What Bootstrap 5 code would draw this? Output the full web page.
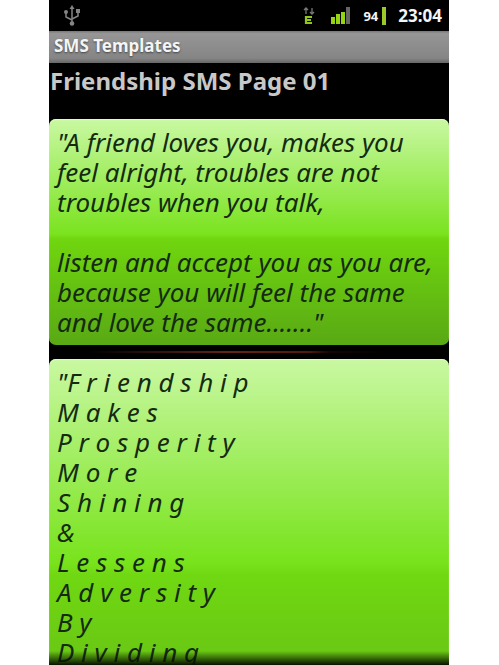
<!DOCTYPE html>
<html lang="en">
<head>
<meta charset="utf-8">
<meta name="viewport" content="width=device-width, initial-scale=1">
<title>SMS Templates</title>
<link href="https://cdn.jsdelivr.net/npm/bootstrap@5.3.0/dist/css/bootstrap.min.css" rel="stylesheet">
<style>
body { background: #fff; font-family: "Noto Sans", "Open Sans", sans-serif; padding: 0 50px 0 49px; }
.screen { background: #000; }
.status-bar { height: 31px; padding: 0 7px 0 14px; color: #f4f4f4; font-weight: 700; }
.status-bar svg { display: block; }
.clock { font-size: 17px; line-height: 30px; }
.level { font-size: 13px; line-height: 30px; }
.title-bar { height: 32px; padding: 0 5px; background: linear-gradient(#777, #969696 8%, #858585 85%, #686868); color: #f5f5f5; font-size: 17px; line-height: 30px; font-weight: 700; text-shadow: 0 1px 2px #444; }
.page-title { font-size: 24px; line-height: 36px; font-weight: 700; color: #c8c8c8; margin: 0 0 20px; padding: 0 1px; }
.messages { min-height: 0; }
.message { border-radius: 7px; padding: 8px 0 8px 8px; color: #142b12; background: linear-gradient(#c9f8a2, #7ae31f 51%, #70d60f 53%, #59a914); font-size: 26px; line-height: 30px; font-style: italic; box-shadow: inset 0 1px 1px #dcffc0; }
.message p { margin: 0; white-space: pre-line; }
.message-long { min-height: 400px; background: linear-gradient(#c9f8a2, #78e31c 51%, #70d812 54%, #62b416); }
.divider { height: 2px; margin: 6px 0; background: linear-gradient(90deg, #000 10%, #65231a 45%, #54170f 65%, #170404 70%, #000 85%); }
.fade-edge { height: 14px; background: linear-gradient(transparent, #081200); }
</style>
<script src="https://cdn.jsdelivr.net/npm/bootstrap@5.3.0/dist/js/bootstrap.bundle.min.js"></script>
</head>
<body>
<div class="screen d-flex flex-column vh-100 overflow-hidden position-relative">
  <header class="status-bar d-flex align-items-center flex-shrink-0">
    <svg class="me-auto" width="18" height="22" viewBox="0 0 18 22" fill="none" stroke="#858585" stroke-width="1.5" role="img" aria-label="USB connected"><path d="M9 3v15M9 15L3 12V7M9 14l6-3V7"/><path d="M9 0l2.500 4h-5zM13 4h4v4h-4z" fill="#858585" stroke="none"/><circle cx="3" cy="7" r="2" fill="#858585" stroke="none"/><circle cx="9" cy="18.500" r="2.300" fill="#858585" stroke="none"/></svg>
    <svg width="12" height="18" viewBox="0 0 12 18" role="img" aria-label="Mobile data"><path d="M3 7V1M1 3l2-2 2 2M9 1v6M7 5l2 2 2-2" fill="none" stroke="#777" stroke-width="1.300"/><path d="M9 10H3v6h6M3 13h5" fill="none" stroke="#8fc51d" stroke-width="2.200"/></svg>
    <svg class="ms-3" width="20" height="18" viewBox="0 0 20 18" role="img" aria-label="Signal strength"><path d="M0 10h4v7H0zM5 7h4v10H5zM10 5h4v12h-4z" fill="#93d510"/><path d="M15 0h4v17h-4z" fill="#666"/></svg>
    <span class="level ps-2 ms-1">94</span>
    <svg class="ms-1" width="4" height="18" viewBox="0 0 4 18" role="img" aria-label="Battery"><path d="M0 0h4v18H0z" fill="#9bc928"/></svg>
    <span class="clock ps-2 ms-1">23:04</span>
  </header>
  <div class="title-bar flex-shrink-0">SMS Templates</div>
  <h1 class="page-title flex-shrink-0">Friendship SMS Page 01</h1>
  <main class="messages flex-grow-1 overflow-hidden">
    <article class="message"><p>"A friend loves you, makes you
feel alright, troubles are not
troubles when you talk,

listen and accept you as you are,
because you will feel the same
and love the same......."</p></article>
    <div class="divider"></div>
    <article class="message message-long"><p>"F r i e n d s h i p
M a k e s
P r o s p e r i t y
M o r e
S h i n i n g
&amp;
L e s s e n s
A d v e r s i t y
B y
D i v i d i n g</p></article>
  </main>
  <div class="fade-edge position-absolute bottom-0 start-0 end-0"></div>
</div>
</body>
</html>
